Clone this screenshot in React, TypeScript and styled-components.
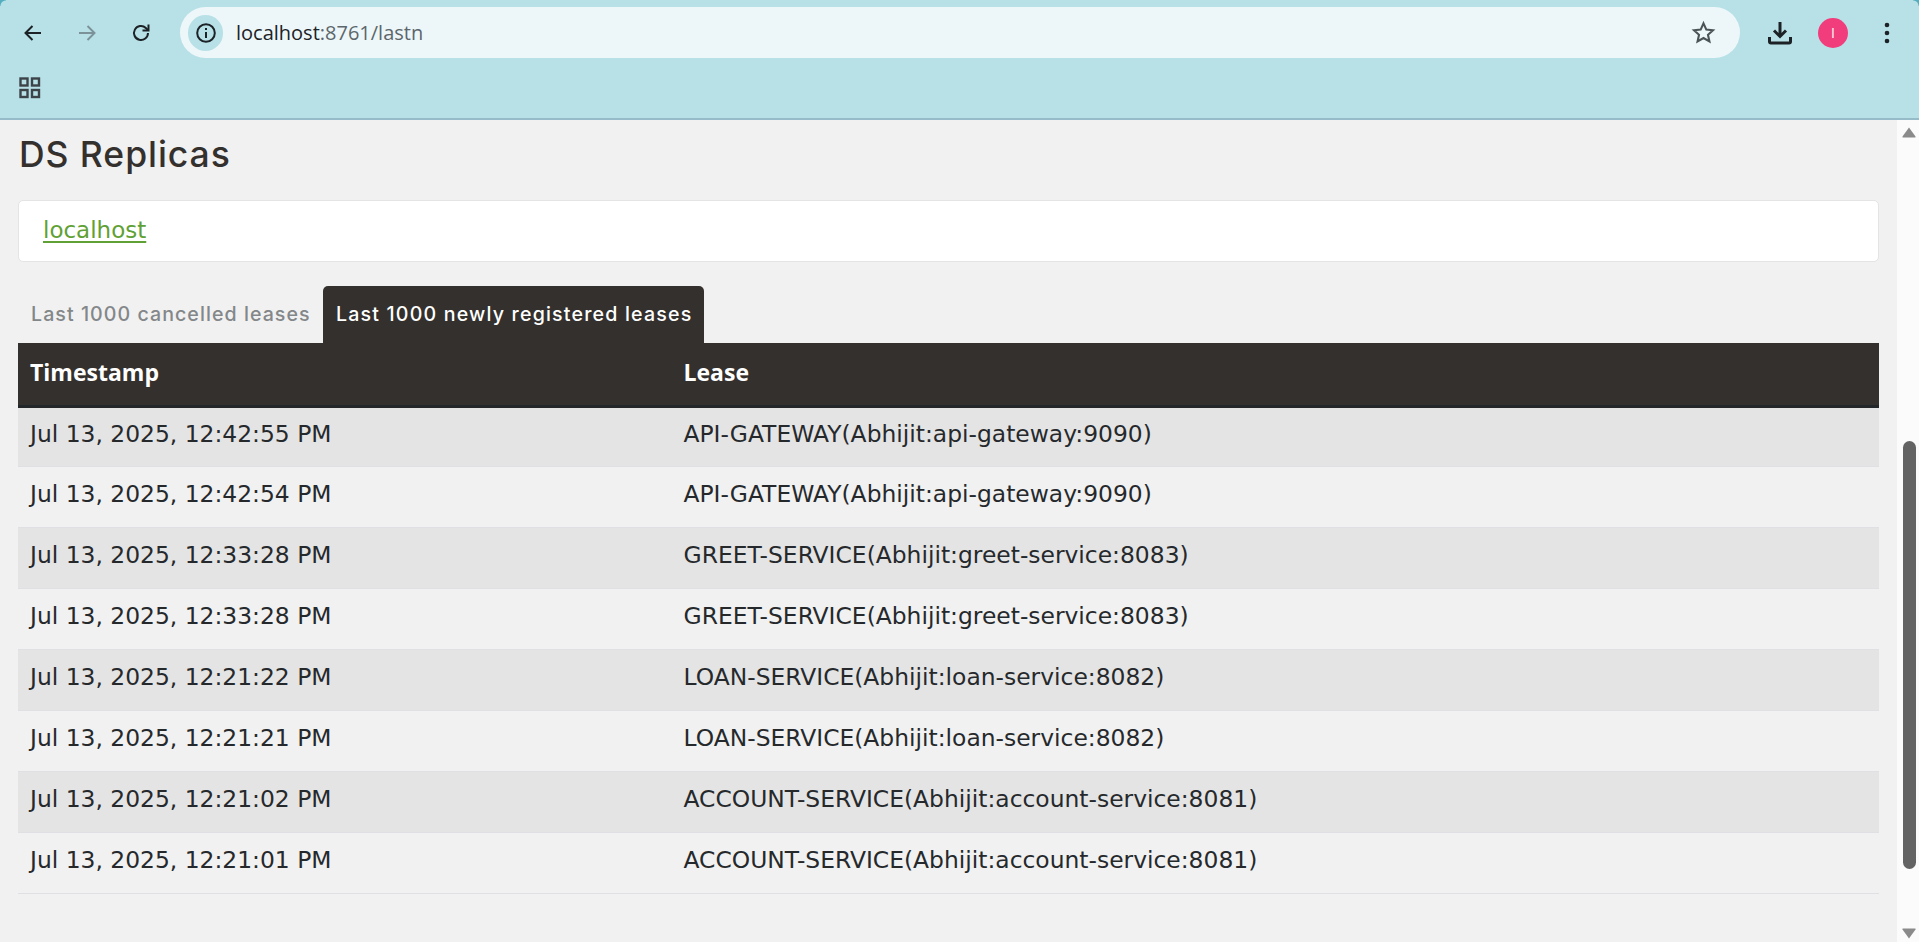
import React from "react";
import styled, { createGlobalStyle } from "styled-components";

const Global = createGlobalStyle`
  html, body { margin: 0; padding: 0; height: 100%; overflow: hidden; background: #f1f1f1; }
  * { box-sizing: border-box; }
`;

const Shell = styled.div`
  width: 1919px;
  height: 942px;
  display: flex;
  flex-direction: column;
  overflow: hidden;
`;

const BrowserChrome = styled.header`
  height: 120px;
  flex: none;
  position: relative;
  background: #b8e1e7;
  border-bottom: 2px solid #95bcc8;
  &::before, &::after {
    content: "";
    position: absolute;
    top: 0;
    width: 6px;
    height: 6px;
    background: radial-gradient(circle at var(--c), transparent 5px, #55aebf 6px);
  }
  &::before { left: 0; --c: 100% 100%; }
  &::after { right: 0; --c: 0% 100%; }
`;

const Toolbar = styled.div`
  height: 65px;
  display: flex;
  align-items: center;
`;

const NavButton = styled.div<{ $w?: number }>`
  width: ${(p) => p.$w ?? 54}px;
  height: 36px;
  flex: none;
  display: flex;
  align-items: center;
  justify-content: center;
`;

const NavGroup = styled.div`
  display: flex;
  margin-left: 6px;
  margin-right: 12px;
`;

const Omnibox = styled.div`
  width: 1560px;
  height: 51px;
  flex: none;
  border-radius: 26px;
  background: #edf7f9;
  display: flex;
  align-items: center;
  padding: 0 24px 0 8px;
`;

const InfoChip = styled.div`
  width: 35px;
  height: 36px;
  border-radius: 18px;
  background: #b8e1e7;
  display: flex;
  align-items: center;
  justify-content: center;
  flex: none;
`;

const Url = styled.div`
  margin-left: 13px;
  flex: 1;
  font: 400 20px "Open Sans", "Noto Sans", sans-serif;
  color: #5c666b;
  b { font-weight: 400; color: #1c2226; }
`;

const RightTools = styled.div`
  display: flex;
  align-items: center;
  margin-left: 16px;
`;

const Avatar = styled.div`
  width: 30px;
  height: 30px;
  border-radius: 50%;
  background: #f23d7c;
  color: #fff;
  display: flex;
  align-items: center;
  justify-content: center;
  font: 400 14px "Open Sans", sans-serif;
`;

const Bookmarks = styled.div`
  height: 53px;
  display: flex;
  align-items: flex-start;
  padding: 12px 0 0 19px;
`;

const Main = styled.div`
  flex: 1;
  min-height: 0;
  display: flex;
`;

const Page = styled.main`
  flex: 1;
  min-width: 0;
  background: #f1f1f1;
  padding: 14px 18px 0 18px;
  color: #34302d;
`;

const Title = styled.h2`
  margin: 0 0 25px 1px;
  font: 500 35.5px/41px "Inter", "Open Sans", sans-serif;
  letter-spacing: 0.95px;
  color: #34302d;
`;

const Card = styled.div`
  height: 62px;
  background: #fff;
  border: 1px solid #e4e4e4;
  border-radius: 5px;
  padding: 0 24px 2px;
  display: flex;
  align-items: center;
  margin-bottom: 24px;
`;

const HostLink = styled.a`
  font: 400 23px "DejaVu Sans", sans-serif;
  color: #5fa134;
  text-decoration: underline;
  text-decoration-thickness: 2px;
  text-underline-offset: 3px;
`;

const Tabs = styled.nav`
  display: flex;
  height: 57px;
`;

const Tab = styled.div<{ $active?: boolean }>`
  width: ${(p) => (p.$active ? 381 : 305)}px;
  padding: 16px 13px 0;
  border-radius: 5px 5px 0 0;
  background: ${(p) => (p.$active ? "#34302d" : "transparent")};
  color: ${(p) => (p.$active ? "#fff" : "#838789")};
  font: 500 19.6px/24px "Inter", "Open Sans", sans-serif;
  letter-spacing: ${(p) => (p.$active ? 1.18 : 1.05)}px;
  white-space: nowrap;
`;

const Table = styled.table`
  width: 100%;
  border-collapse: collapse;
  table-layout: fixed;
  font: 400 23.4px "DejaVu Sans", sans-serif;
`;

const Head = styled.th<{ $w?: number }>`
  width: ${(p) => (p.$w ? `${p.$w}px` : "auto")};
  height: 63px;
  background: #34302d;
  border-bottom: 3px solid #24272a;
  color: #fff;
  text-align: left;
  padding: 0 12px 4px;
  font: 700 23px "Open Sans", sans-serif;
`;

const Row = styled.tr<{ $odd: boolean }>`
  background: ${(p) => (p.$odd ? "#e4e4e4" : "#f1f1f1")};
`;

const Cell = styled.td`
  height: 60.875px;
  padding: 0 12px 6px;
  border-bottom: 1px solid #e0e0e4;
  color: #26292c;
  white-space: nowrap;
`;

const Scrollbar = styled.aside`
  width: 22px;
  flex: none;
  background: #fbfbfb;
  display: flex;
  flex-direction: column;
  align-items: center;
`;

const Arrow = styled.svg<{ $top?: number; $bottom?: number }>`
  width: 14px;
  height: 11px;
  flex: none;
  margin: ${(p) => p.$top ?? 0}px 0 ${(p) => p.$bottom ?? 0}px 2px;
`;

const Thumb = styled.div`
  width: 13px;
  margin-left: 2px;
  height: 428px;
  margin-top: 303px;
  border-radius: 7px;
  background: #636363;
`;

const Gap = styled.div`flex: 1;`;

const rows: [string, string][] = [
  ["Jul 13, 2025, 12:42:55 PM", "API-GATEWAY(Abhijit:api-gateway:9090)"],
  ["Jul 13, 2025, 12:42:54 PM", "API-GATEWAY(Abhijit:api-gateway:9090)"],
  ["Jul 13, 2025, 12:33:28 PM", "GREET-SERVICE(Abhijit:greet-service:8083)"],
  ["Jul 13, 2025, 12:33:28 PM", "GREET-SERVICE(Abhijit:greet-service:8083)"],
  ["Jul 13, 2025, 12:21:22 PM", "LOAN-SERVICE(Abhijit:loan-service:8082)"],
  ["Jul 13, 2025, 12:21:21 PM", "LOAN-SERVICE(Abhijit:loan-service:8082)"],
  ["Jul 13, 2025, 12:21:02 PM", "ACCOUNT-SERVICE(Abhijit:account-service:8081)"],
  ["Jul 13, 2025, 12:21:01 PM", "ACCOUNT-SERVICE(Abhijit:account-service:8081)"],
];

export default function App() {
  return (
    <Shell>
      <Global />
      <BrowserChrome>
        <Toolbar>
          <NavGroup>
            <NavButton>
              <svg width="24" height="24" viewBox="0 0 24 24" fill="none" stroke="#1c2226" strokeWidth="2">
                <path d="M20 12H5M11.5 5l-7 7 7 7" />
              </svg>
            </NavButton>
            <NavButton>
              <svg width="24" height="24" viewBox="0 0 24 24" fill="none" stroke="#7c9299" strokeWidth="2">
                <path d="M4 12h15M12.5 5l7 7-7 7" />
              </svg>
            </NavButton>
            <NavButton>
              <svg width="24" height="24" viewBox="0 0 24 24" fill="none" stroke="#1c2226" strokeWidth="2">
                <path d="M19 12a7 7 0 1 1-2.2-5.1L19 9" />
                <path d="M19.5 3.5V9.5H13.5" />
              </svg>
            </NavButton>
          </NavGroup>
          <Omnibox>
            <InfoChip>
              <svg width="22" height="22" viewBox="0 0 22 22" fill="none" stroke="#1c2226" strokeWidth="2">
                <circle cx="11" cy="11" r="8.8" />
                <path d="M11 10v6M11 6v2" />
              </svg>
            </InfoChip>
            <Url><b>localhost</b>:8761/lastn</Url>
            <svg width="25" height="25" viewBox="0 0 24 24" fill="none" stroke="#4b5357" strokeWidth="2">
              <path d="M12 3.2l2.7 6 6.4.7-4.8 4.3 1.4 6.4L12 17.3l-5.7 3.3 1.4-6.4-4.8-4.3 6.4-.7z" />
            </svg>
          </Omnibox>
          <RightTools>
            <NavButton $w={48}>
              <svg width="26" height="26" viewBox="0 0 26 26" fill="none" stroke="#1c2226" strokeWidth="3">
                <path d="M13 2v13M7 10.5l6 6 6-6" />
                <path d="M2.5 17v4.5a1.5 1.5 0 0 0 1.5 1.5h18a1.5 1.5 0 0 0 1.5-1.5V17" />
              </svg>
            </NavButton>
            <NavButton $w={58}>
              <Avatar>I</Avatar>
            </NavButton>
            <NavButton $w={50}>
              <svg width="6" height="24" viewBox="0 0 6 24" fill="#1c2226">
                <circle cx="3" cy="4" r="2.3" />
                <circle cx="3" cy="12" r="2.3" />
                <circle cx="3" cy="20" r="2.3" />
              </svg>
            </NavButton>
          </RightTools>
        </Toolbar>
        <Bookmarks>
          <svg width="22" height="22" viewBox="0 0 22 22" fill="none" stroke="#3c4449" strokeWidth="2.4">
            <rect x="1.5" y="1.5" width="7" height="7" />
            <rect x="13" y="1.5" width="7" height="7" />
            <rect x="1.5" y="13" width="7" height="7" />
            <rect x="13" y="13" width="7" height="7" />
          </svg>
        </Bookmarks>
      </BrowserChrome>
      <Main>
        <Page>
          <Title>DS Replicas</Title>
          <Card>
            <HostLink href="#">localhost</HostLink>
          </Card>
          <Tabs>
            <Tab>Last 1000 cancelled leases</Tab>
            <Tab $active>Last 1000 newly registered leases</Tab>
          </Tabs>
          <Table>
            <thead>
              <tr>
                <Head $w={653.5}>Timestamp</Head>
                <Head>Lease</Head>
              </tr>
            </thead>
            <tbody>
              {rows.map(([t, l], i) => (
                <Row key={i} $odd={i % 2 === 0}>
                  <Cell>{t}</Cell>
                  <Cell>{l}</Cell>
                </Row>
              ))}
            </tbody>
          </Table>
        </Page>
        <Scrollbar>
          <Arrow viewBox="0 0 14 11" $top={7}>
            <path d="M7 0.5 L13.5 9.5 Q14 10.5 13 10.5 H1 Q0 10.5 0.5 9.5 Z" fill="#8a8a8a" />
          </Arrow>
          <Thumb />
          <Gap />
          <Arrow viewBox="0 0 14 11" $bottom={3}>
            <path d="M7 10.5 L13.5 1.5 Q14 0.5 13 0.5 H1 Q0 0.5 0.5 1.5 Z" fill="#8a8a8a" />
          </Arrow>
        </Scrollbar>
      </Main>
    </Shell>
  );
}
